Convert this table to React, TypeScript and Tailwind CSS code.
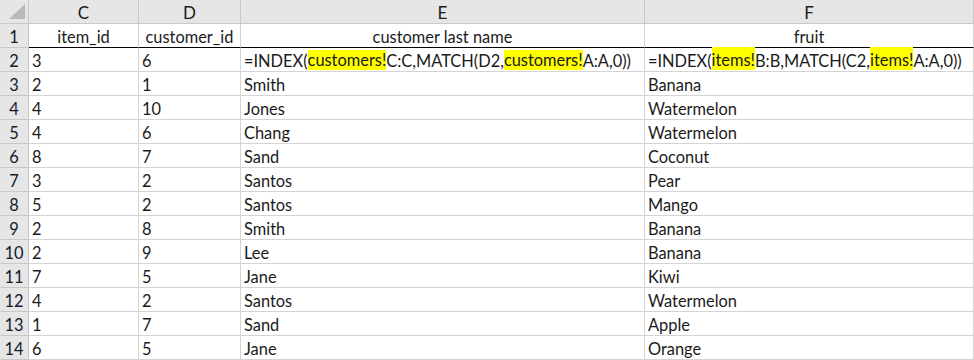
import React from 'react';

type Row = [string, string, string, string];

const rows: Row[] = [
  ['2', '1', 'Smith', 'Banana'],
  ['4', '10', 'Jones', 'Watermelon'],
  ['4', '6', 'Chang', 'Watermelon'],
  ['8', '7', 'Sand', 'Coconut'],
  ['3', '2', 'Santos', 'Pear'],
  ['5', '2', 'Santos', 'Mango'],
  ['2', '8', 'Smith', 'Banana'],
  ['2', '9', 'Lee', 'Banana'],
  ['7', '5', 'Jane', 'Kiwi'],
  ['4', '2', 'Santos', 'Watermelon'],
  ['1', '7', 'Sand', 'Apple'],
  ['6', '5', 'Jane', 'Orange'],
];

const colHead = 'bg-[#e6e6e6] border-r border-b border-[#c8c8c8] flex items-end justify-center pb-[1px]';
const rowHead = 'bg-[#e6e6e6] border-r border-b border-[#c8c8c8] flex items-end justify-center pb-[1px] text-[#141a2e]';
const cell = 'border-r border-b border-[#d4d4d4] flex items-end px-[3px] pb-[1px] whitespace-nowrap overflow-visible';

// yellow marker behind a sheet name
const Hl = ({ children, tall }: { children: React.ReactNode; tall?: boolean }) => (
  <span className={tall ? 'bg-[#ffff00] inline-block pt-[3px] pb-[1px] -mt-[3px]' : 'bg-[#ffff00] inline-block pb-[1px]'}>
    {children}
  </span>
);

const Sheet: React.FC = () => {
  return (
    <div
      className="w-[974px] h-[360px] bg-white overflow-hidden text-[16.4px] leading-[19px] text-[#1b1b1b]"
      style={{ fontFamily: 'Lato, "Open Sans", sans-serif' }}
    >
      <div className="grid grid-cols-[29px_110px_102px_404px_329px] grid-rows-[repeat(15,24px)]">
        {/* column letters */}
        <div className={`${colHead} relative`}>
          <svg className="absolute left-0 top-0" width="28" height="23" viewBox="0 0 28 23">
            <polygon points="9,19 25,19 25,4" fill="#b9b9b9" />
          </svg>
        </div>
        {['C', 'D', 'E', 'F'].map((c) => (
          <div key={c} className={`${colHead} text-[17px]`}>{c}</div>
        ))}

        {/* row 1 */}
        <div className={rowHead}>1</div>
        {['item_id', 'customer_id', 'customer last name', 'fruit'].map((h) => (
          <div key={h} className={`${cell} justify-center border-b-black`}>{h}</div>
        ))}

        {/* row 2 with formulas */}
        <div className={rowHead}>2</div>
        <div className={cell}>3</div>
        <div className={cell}>6</div>
        <div className={cell}>
          =INDEX(<Hl>customers!</Hl>C:C,MATCH(D2,<Hl>customers!</Hl>A:A,0))
        </div>
        <div className={cell}>
          =INDEX(<Hl tall>items!</Hl>B:B,MATCH(C2,<Hl tall>items!</Hl>A:A,0))
        </div>

        {rows.map((r, i) => (
          <React.Fragment key={i}>
            <div className={rowHead}>{i + 3}</div>
            {r.map((v, j) => (
              <div key={j} className={cell}>{v}</div>
            ))}
          </React.Fragment>
        ))}
      </div>
    </div>
  );
};

export default function App() {
  return <Sheet />;
}
